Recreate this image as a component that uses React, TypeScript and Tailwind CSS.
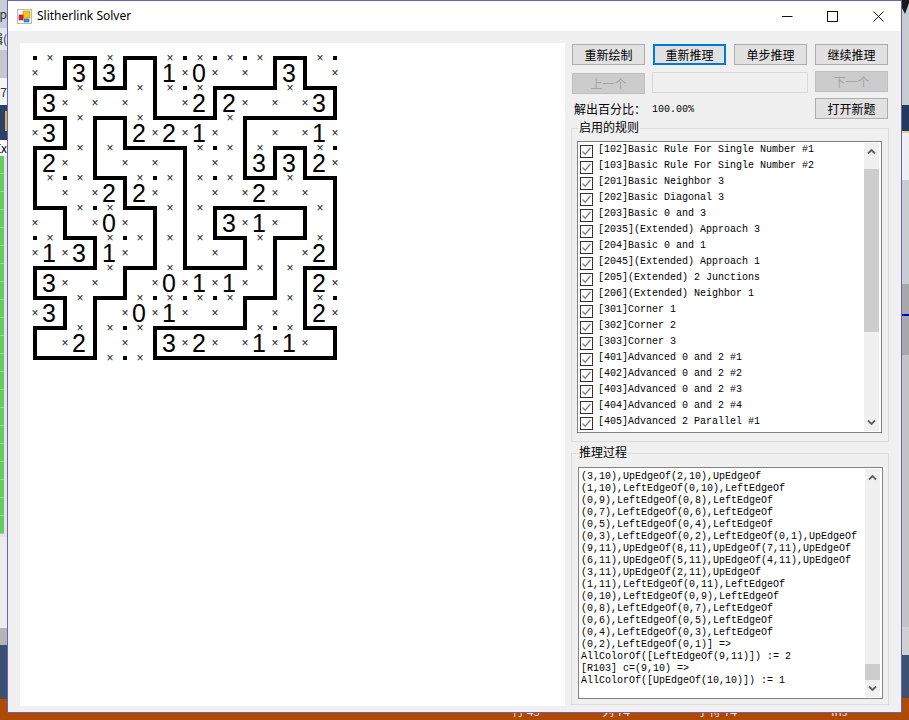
const MONO = "font-['Liberation_Mono','Noto_Sans_CJK_SC',monospace] text-[10px]";
const CJK = "font-['Noto_Sans_CJK_SC',sans-serif] text-[12px]";

const NUMBERS = [
  ".33.10..3.",
  "3....22..3",
  "3..221...1",
  "2......332",
  "..22...2..",
  "..0...31..",
  "131......2",
  "3...011..2",
  "3..01....2",
  ".2..32.11.",
];

const LOOP = [
  [0, 1], [1, 1], [1, 0], [2, 0], [2, 1], [3, 1], [3, 0], [4, 0], [4, 2], [6, 2], [6, 1], [8, 1], [8, 0], [9, 0],
  [9, 1], [10, 1], [10, 2], [7, 2], [7, 4], [8, 4], [8, 3], [9, 3], [9, 4], [10, 4], [10, 7], [9, 7], [9, 9], [10, 9],
  [10, 10], [4, 10], [4, 9], [7, 9], [7, 8], [8, 8], [8, 6], [9, 6], [9, 5], [6, 5], [6, 6], [7, 6], [7, 7], [5, 7],
  [5, 3], [3, 3], [3, 2], [2, 2], [2, 4], [3, 4], [3, 5], [4, 5], [4, 7], [3, 7], [3, 8], [2, 8], [2, 10], [0, 10],
  [0, 9], [1, 9], [1, 8], [0, 8], [0, 7], [2, 7], [2, 6], [1, 6], [1, 5], [0, 5], [0, 3], [1, 3], [1, 2], [0, 2],
];

// half-cell steps, index = row of half steps
const CROSSES = [
  [1, 5, 9, 11, 13, 15, 19],
  [0, 10, 12, 14, 20],
  [3, 7, 9, 11, 17],
  [2, 4, 6, 10, 14, 16, 18],
  [3, 7, 13],
  [0, 8, 10, 12, 16, 18, 20],
  [3, 5, 11, 13, 15, 19],
  [2, 6, 8, 12, 20],
  [1, 3, 7, 9, 11, 13, 17],
  [2, 4, 8, 12, 14, 16, 18],
  [3, 5, 9, 11, 19],
  [0, 4, 6, 14, 16],
  [1, 5, 7, 9, 11, 15, 19],
  [0, 2, 6, 12, 18],
  [5, 9, 15, 17],
  [2, 4, 8, 10, 12, 14, 20],
  [3, 7, 9, 11, 13, 17, 19],
  [0, 6, 8, 10, 12, 16, 20],
  [3, 5, 7, 15, 17],
  [2, 6, 10, 12, 14, 16, 18],
  [5, 7],
];

const DOTS: Array<[number, number]> = [
  [0, 0], [5, 0], [6, 0], [7, 0], [10, 0], [5, 1], [6, 3], [10, 3], [1, 4], [4, 4], [6, 4], [2, 5],
  [0, 6], [3, 6], [4, 8], [5, 8], [6, 8], [10, 8], [3, 9], [8, 9], [3, 10],
];

const RULES = [
  "[102]Basic Rule For Single Number #1",
  "[103]Basic Rule For Single Number #2",
  "[201]Basic Neighbor 3",
  "[202]Basic Diagonal 3",
  "[203]Basic 0 and 3",
  "[2035](Extended) Approach 3",
  "[204]Basic 0 and 1",
  "[2045](Extended) Approach 1",
  "[205](Extended) 2 Junctions",
  "[206](Extended) Neighbor 1",
  "[301]Corner 1",
  "[302]Corner 2",
  "[303]Corner 3",
  "[401]Advanced 0 and 2 #1",
  "[402]Advanced 0 and 2 #2",
  "[403]Advanced 0 and 2 #3",
  "[404]Advanced 0 and 2 #4",
  "[405]Advanced 2 Parallel #1",
];

const LOG = [
  "(3,10),UpEdgeOf(2,10),UpEdgeOf",
  "(1,10),LeftEdgeOf(0,10),LeftEdgeOf",
  "(0,9),LeftEdgeOf(0,8),LeftEdgeOf",
  "(0,7),LeftEdgeOf(0,6),LeftEdgeOf",
  "(0,5),LeftEdgeOf(0,4),LeftEdgeOf",
  "(0,3),LeftEdgeOf(0,2),LeftEdgeOf(0,1),UpEdgeOf",
  "(9,11),UpEdgeOf(8,11),UpEdgeOf(7,11),UpEdgeOf",
  "(6,11),UpEdgeOf(5,11),UpEdgeOf(4,11),UpEdgeOf",
  "(3,11),UpEdgeOf(2,11),UpEdgeOf",
  "(1,11),LeftEdgeOf(0,11),LeftEdgeOf",
  "(0,10),LeftEdgeOf(0,9),LeftEdgeOf",
  "(0,8),LeftEdgeOf(0,7),LeftEdgeOf",
  "(0,6),LeftEdgeOf(0,5),LeftEdgeOf",
  "(0,4),LeftEdgeOf(0,3),LeftEdgeOf",
  "(0,2),LeftEdgeOf(0,1)] =>",
  "AllColorOf([LeftEdgeOf(9,11)]) := 2",
  "[R103] c=(9,10) =>",
  "AllColorOf([UpEdgeOf(10,10)]) := 1",
];

function Board() {
  const points = LOOP.map(([i, j]) => `${15 + i * 30},${15 + j * 30}`).join(" ");
  return (
    <div className="relative w-[545px] h-[663px] bg-white overflow-hidden">
      <svg className="absolute left-0 top-0" width="345" height="345">
        <polygon points={points} fill="none" stroke="#000" strokeWidth="4" strokeLinejoin="miter" />
        {DOTS.map(([i, j]) => (
          <rect key={`${i}-${j}`} x={13 + i * 30} y={13 + j * 30} width="4" height="4" fill="#000" />
        ))}
      </svg>
      {CROSSES.map((row, b) =>
        row.map((a) => (
          <span
            key={`${a}-${b}`}
            className="absolute w-[10px] h-[10px] leading-[10px] text-center text-[12px] text-[#1a1a1a] font-['Liberation_Sans',sans-serif]"
            style={{ left: 10 + a * 15, top: 10 + b * 15 }}
          >
            ×
          </span>
        )),
      )}
      {NUMBERS.map((row, j) =>
        row.split("").map((n, i) =>
          n === "." ? null : (
            <span
              key={`${i}-${j}`}
              className="absolute w-[30px] h-[30px] leading-[30px] text-center text-[25px] text-black font-['Liberation_Sans',sans-serif]"
              style={{ left: 14 + i * 30, top: 15 + j * 30 }}
            >
              {n}
            </span>
          ),
        ),
      )}
    </div>
  );
}

function Btn({ label, focused = false }: { label: string; focused?: boolean }) {
  return (
    <button
      type="button"
      className={`w-[73px] h-[21px] shrink-0 flex items-center justify-center bg-[#e1e1e1] text-black ${
        focused ? "border-2 border-[#0078d7]" : "border border-[#adadad]"
      } ${CJK}`}
    >
      {label}
    </button>
  );
}

function DisabledBtn({ label, className = "" }: { label: string; className?: string }) {
  return (
    <button
      type="button"
      className={`w-[73px] h-[21px] shrink-0 flex items-center justify-center bg-[#cccccc] border border-[#bfbfbf] text-[#a3a3a3] ${CJK} ${className}`}
    >
      {label}
    </button>
  );
}

function ScrollBar({ thumb }: { thumb: string }) {
  return (
    <div className="w-[15px] shrink-0 mr-[2px] my-px bg-[#f0f0f0] flex flex-col">
      <div className="h-[17px] shrink-0 flex items-center justify-center">
        <svg width="9" height="7" viewBox="0 0 9 7">
          <path d="M1 5.5 L4.5 2 L8 5.5" fill="none" stroke="#606060" strokeWidth="1.8" />
        </svg>
      </div>
      <div className={`bg-[#cdcdcd] ${thumb}`} />
      <div className="flex-1" />
      <div className="h-[17px] shrink-0 flex items-center justify-center">
        <svg width="9" height="7" viewBox="0 0 9 7">
          <path d="M1 1.5 L4.5 5 L8 1.5" fill="none" stroke="#606060" strokeWidth="1.8" />
        </svg>
      </div>
    </div>
  );
}

function RuleRow({ text }: { text: string }) {
  return (
    <div className="h-4 flex items-start pl-[2px]">
      <div className="mt-[2px] w-[13px] h-[13px] shrink-0 border border-[#333333] bg-white flex items-center justify-center">
        <svg width="11" height="11" viewBox="0 0 11 11">
          <path d="M1.5 5.5 L4.2 8.3 L9.5 2" fill="none" stroke="#7f7f7f" strokeWidth="1.3" />
        </svg>
      </div>
      <span className={`ml-[5px] leading-[14px] whitespace-pre text-black ${MONO}`}>{text}</span>
    </div>
  );
}

function Group({ label, className, children }: { label: string; className: string; children: React.ReactNode }) {
  return (
    <div className={`relative w-[318px] border border-[#dcdcdc] ${className}`}>
      <span className={`absolute left-[6px] top-[-9px] px-px leading-[14px] bg-[#f0f0f0] text-black ${CJK}`}>{label}</span>
      {children}
    </div>
  );
}

function RightPanel() {
  return (
    <div className="ml-[6px] w-[318px] flex flex-col">
      <div className="mt-px pl-px flex gap-2">
        <Btn label="重新绘制" />
        <Btn label="重新推理" focused />
        <Btn label="单步推理" />
        <Btn label="继续推理" />
      </div>
      <div className="mt-[6px] pl-px h-[23px] flex items-start">
        <DisabledBtn label="上一个" className="mt-[2px]" />
        <div className="ml-[7px] mt-px w-[156px] h-[21px] border border-[#d9d9d9] bg-[#f0f0f0]" />
        <DisabledBtn label="下一个" className="ml-[7px]" />
      </div>
      <div className="mt-[4px] pl-px flex items-center h-[21px]">
        <span className={`ml-[2px] w-[78px] text-black ${CJK}`}>解出百分比：</span>
        <span className={`w-[163px] mt-px text-black ${MONO}`}>100.00%</span>
        <Btn label="打开新题" />
      </div>
      <Group label="启用的规则" className="mt-[9px] h-[314px]">
        <div className="ml-[5px] mt-3 w-[305px] h-[292px] border border-[#828282] bg-white flex overflow-hidden">
          <div className="flex-1 pt-px overflow-hidden">
            {RULES.map((r) => (
              <RuleRow key={r} text={r} />
            ))}
          </div>
          <ScrollBar thumb="mt-[9px] h-[163px]" />
        </div>
      </Group>
      <Group label="推理过程" className="mt-[11px] h-[252px]">
        <div className="ml-[6px] mt-[13px] w-[305px] h-[232px] border border-[#828282] bg-white flex overflow-hidden">
          <div className="flex-1 pt-[3px] pl-[2px] overflow-hidden">
            {LOG.map((line, i) => (
              <div key={i} className={`h-3 leading-[12px] whitespace-pre text-black ${MONO}`}>
                {line}
              </div>
            ))}
          </div>
          <ScrollBar thumb="mt-[178px] h-[17px]" />
        </div>
      </Group>
    </div>
  );
}

function AppIcon() {
  return (
    <svg width="15" height="15" viewBox="0 0 15 15">
      <rect x="0.5" y="0.5" width="14" height="14" fill="#ffffff" stroke="#b9b9b9" />
      <rect x="6" y="2" width="7" height="7" fill="#f5c518" stroke="#b98a10" strokeWidth="0.6" />
      <rect x="2" y="6" width="4" height="5" fill="#d8282f" stroke="#8f1a1f" strokeWidth="0.6" />
      <rect x="7" y="10" width="5" height="3" fill="#3f86e0" stroke="#2560a8" strokeWidth="0.6" />
    </svg>
  );
}

function TitleBar() {
  return (
    <div className="h-[30px] shrink-0 bg-white flex items-center">
      <div className="ml-[9px]">
        <AppIcon />
      </div>
      <span className="ml-[5px] text-[12px] text-black font-['Noto_Sans',sans-serif]">Slitherlink Solver</span>
      <div className="ml-auto mr-[17px] flex items-center gap-[34px]">
        <svg width="11" height="11" viewBox="0 0 11 11">
          <path d="M0 5.5 H10.5" stroke="#111" strokeWidth="1" fill="none" />
        </svg>
        <svg width="11" height="11" viewBox="0 0 11 11">
          <rect x="0.5" y="0.5" width="10" height="10" stroke="#111" strokeWidth="1" fill="none" />
        </svg>
        <svg className="ml-px" width="11" height="11" viewBox="0 0 11 11">
          <path d="M0.5 0.5 L10.5 10.5 M10.5 0.5 L0.5 10.5" stroke="#111" strokeWidth="1" fill="none" />
        </svg>
      </div>
    </div>
  );
}

function LeftStrip() {
  return (
    <div className="w-[7px] shrink-0 flex flex-col overflow-hidden text-[12px] leading-[14px] text-[#333333] font-['Noto_Sans_CJK_SC',sans-serif]">
      <div className="h-[28px] bg-[#c9cdd6] flex justify-end items-center whitespace-nowrap">xp</div>
      <div className="h-[22px] bg-[#e4e6ea] flex justify-end items-center whitespace-nowrap">辑(</div>
      <div className="h-[28px] bg-[#c5c7cc]" />
      <div className="h-[27px] bg-[#f5f5f5] flex justify-end items-center whitespace-nowrap">37</div>
      <div className="h-[35px] bg-[#2b4166] flex justify-end">
        <div className="w-[2px] h-[20px] mt-[6px] bg-[#d9b44a]" />
      </div>
      <div className="h-[16px] bg-white flex justify-end items-center whitespace-nowrap text-black">Ex</div>
      <div className="h-[381px] bg-[#e6e6e6] flex flex-col overflow-hidden">
        {Array.from({ length: 21 }, (_, i) => (
          <div key={i} className="w-[4px] h-[18px] shrink-0 bg-[#62cc62] border-b border-[#8fdc8f]" />
        ))}
      </div>
      <div className="h-[91px] bg-[#ececec]" />
      <div className="h-[17px] bg-[#b4b4b4]" />
      <div className="h-[54px] bg-[#3c5170]" />
      <div className="flex-1 bg-[#b04a00]" />
    </div>
  );
}

function RightStrip() {
  return (
    <div className="w-[7px] shrink-0 flex flex-col overflow-hidden">
      <div className="h-[15px] bg-[#c7cbd2]">
        <svg width="7" height="15" viewBox="0 0 7 15">
          <path d="M0 0 H7 V3 L3 14 L0 8 Z" fill="#1a1a1a" />
        </svg>
      </div>
      <div className="h-[90px] bg-[#c7cbd2]" />
      <div className="h-[26px] bg-[#223a5e]" />
      <div className="h-[2px] bg-[#e8d27a]" />
      <div className="h-[47px] bg-[#eef0f4]" />
      <div className="h-[104px] bg-[#c9cdd3]" />
      <div className="h-[30px] bg-[#a8a8a8]" />
      <div className="h-[2px] bg-[#0000c8]" />
      <div className="h-[39px] bg-[#a8a8a8]" />
      <div className="h-[272px] bg-[#c4c4c4]" />
      <div className="h-[28px] bg-[#d0d0d0]" />
      <div className="h-[43px] bg-[#3c5170]" />
      <div className="flex-1 bg-[#b04a00]" />
    </div>
  );
}

function StatusStrip() {
  return (
    <div className="h-[7px] shrink-0 bg-[#b04a00] overflow-hidden flex text-[12px] leading-[14px] text-[#f0e0d0] font-['Noto_Sans_CJK_SC',sans-serif]">
      <div className="ml-[512px] mt-[-9px] w-[90px] whitespace-pre">行 43</div>
      <div className="mt-[-9px] w-[95px] whitespace-pre">列 74</div>
      <div className="mt-[-9px] w-[134px] whitespace-pre">字符 74</div>
      <div className="mt-[-9px] whitespace-pre">Ins</div>
    </div>
  );
}

export default function App() {
  return (
    <div className="w-[909px] h-[720px] flex flex-col overflow-hidden">
      <div className="h-[713px] flex">
        <LeftStrip />
        <div className="w-[895px] h-[713px] shrink-0 border border-[#6a5fc4] bg-[#f0f0f0] flex flex-col">
          <TitleBar />
          <div className="flex-1 pt-3 pl-3 flex items-start">
            <Board />
            <RightPanel />
          </div>
        </div>
        <RightStrip />
      </div>
      <StatusStrip />
    </div>
  );
}
